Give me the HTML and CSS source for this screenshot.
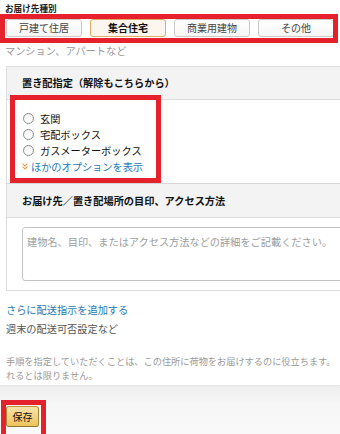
FILE: index.html
```html
<!DOCTYPE html>
<html lang="ja">
<head>
<meta charset="utf-8">
<title>お届け先種別</title>
<link rel="stylesheet" href="styles.css">
</head>
<body>
<div class="page">
  <div class="field-label">お届け先種別</div>
  <div class="tabs">
    <button class="tab">戸建て住居</button>
    <button class="tab is-active">集合住宅</button>
    <button class="tab">商業用建物</button>
    <button class="tab">その他</button>
  </div>
  <p class="type-note">マンション、アパートなど</p>

  <section class="panel">
    <div class="panel-head">置き配指定（解除もこちらから）</div>
    <div class="options">
      <label class="option"><span class="radio"></span>玄関</label>
      <label class="option"><span class="radio"></span>宅配ボックス</label>
      <label class="option"><span class="radio"></span>ガスメーターボックス</label>
      <a class="more" href="#"><svg class="chev" width="6" height="7" viewBox="0 0 6 7"><polyline points="0.6,0.6 3,3 5.4,0.6" fill="none" stroke="#e8a04a" stroke-width="1.1"/><polyline points="0.6,3.6 3,6 5.4,3.6" fill="none" stroke="#e8a04a" stroke-width="1.1"/></svg>ほかのオプションを表示</a>
    </div>
    <div class="panel-head panel-head--sep">お届け先／置き配場所の目印、アクセス方法</div>
    <div class="note-area">
      <textarea class="note-input" placeholder="建物名、目印、またはアクセス方法などの詳細をご記載ください。"></textarea>
    </div>
  </section>

  <a class="add-link" href="#">さらに配送指示を追加する</a>
  <p class="sub">週末の配送可否設定など</p>
  <p class="help"><span class="help-line">手順を指定していただくことは、この住所に荷物をお届けするのに役立ちます。</span><span class="help-line">れるとは限りません。</span></p>

  <div class="footer">
    <button class="save">保存</button>
  </div>

  <div class="mark mark-tabs"></div>
  <div class="mark mark-options"></div>
  <div class="mark mark-save"></div>
</div>
</body>
</html>
```

FILE: styles.css
```css
html, body {
  margin: 0;
  padding: 0;
  background: #fff;
  overflow: hidden;
}

body {
  width: 340px;
  height: 434px;
  font-family: "Noto Sans CJK JP", "Noto Sans", sans-serif;
  color: #111;
}

.page {
  position: relative;
  width: 340px;
  height: 434px;
  overflow: hidden;
}

.field-label {
  padding: 1px 0 0 5px;
  height: 14px;
  line-height: 14px;
  font-size: 8.6px;
  font-weight: bold;
  color: #222;
}

.tabs {
  display: flex;
  gap: 8px;
  margin-top: 4px;
  padding-left: 6px;
}

.tab {
  flex: 0 0 76px;
  width: 76px;
  height: 18px;
  padding: 0;
  margin: 0;
  border: 1px solid #c9c9c9;
  border-radius: 3px;
  background: linear-gradient(#ffffff, #f6f6f6);
  font-family: inherit;
  font-size: 10px;
  line-height: 16px;
  color: #444;
  text-align: center;
}

.tab.is-active {
  border-color: #e2a867;
  background: #fdf6ee;
  font-weight: bold;
  color: #111;
}

.type-note {
  margin: 7px 0 0;
  padding-left: 5px;
  height: 14px;
  line-height: 14px;
  font-size: 10.2px;
  color: #9a9a9a;
}

.panel {
  margin: 8px 0 0 6px;
  width: 380px;
  border: 1px solid #dddddd;
  background: #fff;
}

.panel-head {
  height: 32px;
  line-height: 32px;
  padding-left: 15px;
  background: #f3f3f3;
  border-bottom: 1px solid #dddddd;
  font-size: 10.2px;
  font-weight: bold;
  color: #111;
}

.panel-head--sep {
  height: 33px;
  line-height: 33px;
  border-top: 1px solid #d6d6d6;
}

.options {
  display: flex;
  flex-direction: column;
  padding: 10px 0 9px 16px;
}

.option {
  display: flex;
  align-items: center;
  gap: 6px;
  height: 16px;
  font-size: 10.2px;
  color: #111;
}

.radio {
  width: 11px;
  height: 11px;
  box-sizing: border-box;
  border: 1px solid #8a8a8a;
  border-radius: 50%;
  background: linear-gradient(#f4f4f4, #ffffff);
}

.more {
  display: flex;
  align-items: center;
  gap: 3px;
  height: 16px;
  margin-left: -1px;
  font-size: 10.2px;
  color: #1f78b4;
  text-decoration: none;
}

.chev {
  display: block;
  margin-top: 1px;
}

.note-area {
  padding: 9px 0 9px 15px;
}

.note-input {
  display: block;
  box-sizing: border-box;
  width: 340px;
  height: 54px;
  margin: 0;
  padding: 7px 4px;
  border: 1px solid #c4c4c4;
  border-radius: 3px;
  resize: none;
  font-family: inherit;
  font-size: 10.2px;
  line-height: 14px;
  color: #111;
  background: #fff;
}

.note-input::placeholder {
  color: #9d9d9d;
}

.add-link {
  display: block;
  margin-top: 12px;
  padding-left: 6px;
  height: 14px;
  line-height: 14px;
  font-size: 10.2px;
  color: #1f78b4;
  text-decoration: none;
}

.sub {
  margin: 5px 0 0;
  padding-left: 6px;
  height: 14px;
  line-height: 14px;
  font-size: 10.2px;
  color: #555;
}

.help {
  margin: 18px 0 0;
  padding-left: 6px;
  font-size: 9.2px;
  line-height: 14px;
  color: #9a9a9a;
}

.help-line {
  display: block;
  white-space: nowrap;
}

.footer {
  margin-top: 3px;
  height: 60px;
  padding: 20px 0 0 6px;
  border-top: 1px solid #e6e6e6;
  background: linear-gradient(#ededed, #f7f7f7 18px, #fbfbfb);
}

.save {
  display: block;
  width: 33px;
  height: 21px;
  padding: 0;
  margin: 0;
  border: 1px solid #a88734;
  border-color: #b8963f #a88734 #8d7330;
  border-radius: 3px;
  background: linear-gradient(#f8e3ad, #eec35a);
  font-family: inherit;
  font-size: 10px;
  line-height: 19px;
  color: #111;
}

.mark {
  position: absolute;
  box-sizing: border-box;
  border: 5px solid #e5222b;
  pointer-events: none;
}

.mark-tabs {
  left: 0;
  top: 14px;
  width: 338px;
  height: 29px;
}

.mark-options {
  left: 10px;
  top: 95px;
  width: 151px;
  height: 88px;
}

.mark-save {
  left: 1px;
  top: 400px;
  width: 45px;
  height: 40px;
}
```
